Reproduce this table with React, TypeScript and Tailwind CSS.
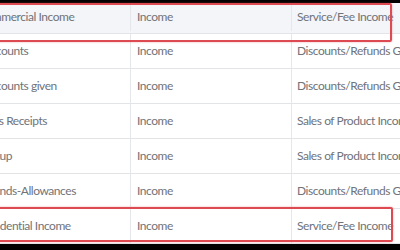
const rows = [
  { name: "Commercial Income", shift: "ml-[-22px]", type: "Income", detail: "Service/Fee Income" },
  { name: "Discounts", shift: "ml-[-20px]", type: "Income", detail: "Discounts/Refunds Given" },
  { name: "Discounts given", shift: "ml-[-20px]", type: "Income", detail: "Discounts/Refunds Given" },
  { name: "Sales Receipts", shift: "ml-[-21px]", type: "Income", detail: "Sales of Product Income" },
  { name: "Markup", shift: "ml-[-26px]", type: "Income", detail: "Sales of Product Income" },
  { name: "Refunds-Allowances", shift: "ml-[-23px]", type: "Income", detail: "Discounts/Refunds Given" },
  { name: "Residential Income", shift: "ml-[-20px]", type: "Income", detail: "Service/Fee Income" },
];

function Row({
  name,
  shift,
  type,
  detail,
  first,
}: {
  name: string;
  shift: string;
  type: string;
  detail: string;
  first?: boolean;
}) {
  return (
    <div
      className={`flex border-b border-[#e2e4e8] ${
        first ? "h-[31px] bg-[#f4f5f8] pb-[2px]" : "h-[35px] bg-white"
      }`}
    >
      <div className="w-[131px] shrink-0 overflow-hidden border-r border-[#e6e7ea] flex items-center">
        <span className={`${shift} whitespace-nowrap`}>{name}</span>
      </div>
      <div className="w-[161px] shrink-0 border-r border-[#e6e7ea] flex items-center pl-[6px]">
        <span className="whitespace-nowrap">{type}</span>
      </div>
      <div className="flex-1 overflow-hidden flex items-center pl-[5px]">
        <span className="whitespace-nowrap">{detail}</span>
      </div>
    </div>
  );
}

export default function App() {
  return (
    <div className="relative w-[400px] h-[250px] overflow-hidden bg-black font-['Lato',sans-serif] text-[12px] tracking-[-0.45px] text-[#707379]">
      <div className="h-[3px]" />
      {rows.map((r, i) => (
        <Row key={r.name} {...r} first={i === 0} />
      ))}

      {/* highlight boxes */}
      <div className="absolute left-[-10px] top-[3px] w-[402px] h-[39px] rounded-[2px] border-2 border-[#dd4a52] shadow-[0_0_2px_rgba(221,74,82,0.5)]" />
      <div className="absolute left-[-10px] top-[207px] w-[403px] h-[35px] rounded-[2px] border-2 border-[#dd4a52] shadow-[0_0_2px_rgba(221,74,82,0.5)]" />
    </div>
  );
}
